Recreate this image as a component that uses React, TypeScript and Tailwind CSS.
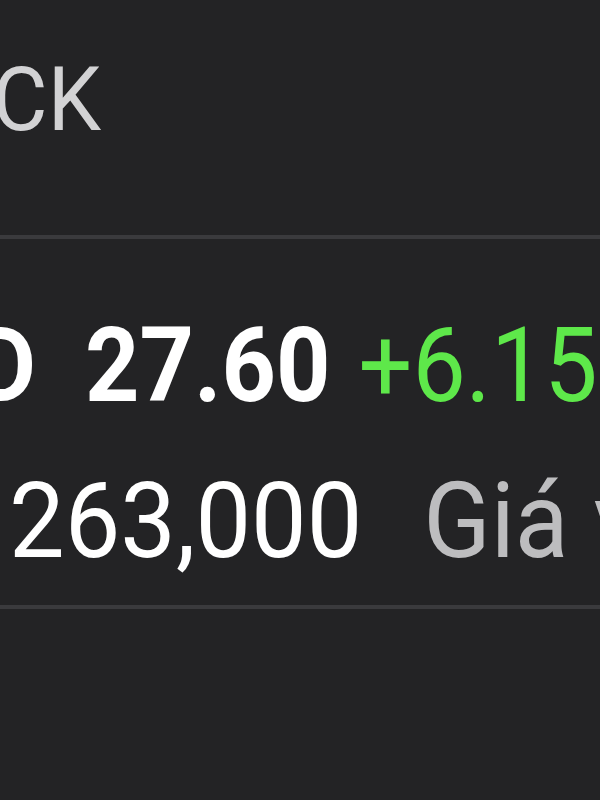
import React from 'react';

export default function App() {
  return (
    <div
      className="w-[600px] h-[800px] overflow-hidden bg-[#232325] text-white"
      style={{ fontFamily: 'Roboto, "Noto Sans", sans-serif' }}
    >
      {/* Header tab */}
      <div className="h-[235px] flex items-start pt-[60px] overflow-hidden">
        <div className="flex justify-end w-[101px] shrink-0 scale-y-[1.05] origin-bottom">
          <span className="whitespace-nowrap text-[85px] leading-none text-[#d2d2d4]">STOCK</span>
        </div>
      </div>

      <div className="h-[4px] bg-[#3a3a3d]" />

      {/* Price row */}
      <div className="h-[366px] overflow-hidden">
        <div className="flex items-baseline whitespace-nowrap pt-[83px] leading-none text-[95px] scale-y-[1.09] origin-bottom">
          <div className="w-[36px] shrink-0 flex justify-end">
            <span className="font-bold">VND</span>
          </div>
          <span className="ml-[49px] font-bold">27.60</span>
          <span className="ml-[28px] text-[#5ee84a]">+6.15%</span>
        </div>
        <div className="flex items-baseline whitespace-nowrap pt-[58px] leading-none text-[99px] scale-y-[1.06] origin-bottom">
          <span className="ml-[9px]">263,000</span>
          <span className="ml-[61px] text-[#bdbdbf]">Giá vốn</span>
        </div>
      </div>

      <div className="h-[4px] bg-[#3a3a3d]" />
    </div>
  );
}
